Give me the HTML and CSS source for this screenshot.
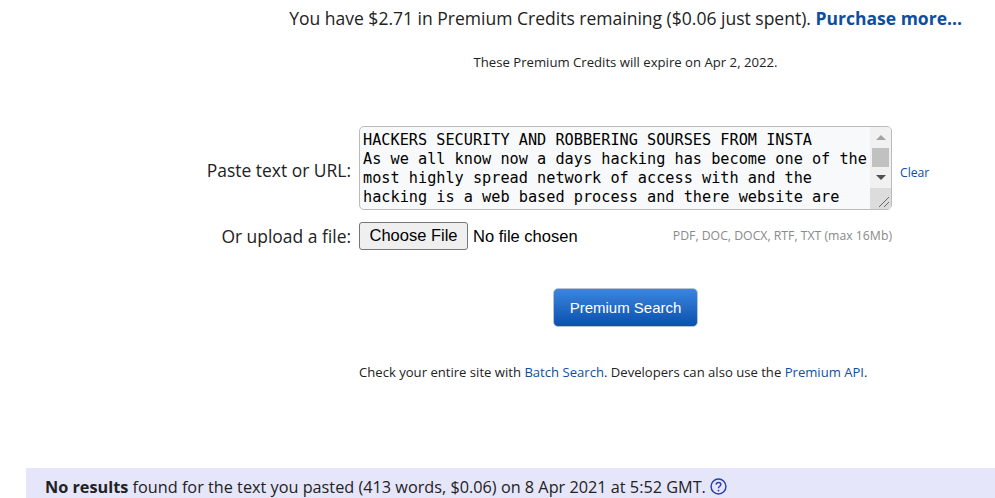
FILE: index.html
```html
<!DOCTYPE html>
<html lang="en">
<head>
  <meta charset="UTF-8">
  <meta name="viewport" content="width=device-width, initial-scale=1.0">
  <title>Premium Search</title>
  <link rel="stylesheet" href="styles.css">
</head>
<body>
  <div class="credits">
    <p class="credits-line">You have $2.71 in Premium Credits remaining ($0.06 just spent). <a href="#" class="link-strong">Purchase more...</a></p>
    <p class="credits-expiry">These Premium Credits will expire on Apr 2, 2022.</p>
  </div>

  <form class="search-form">
    <label for="text" class="form-label">Paste text or URL:</label>
    <div class="text-wrap">
      <textarea id="text" class="text-input" spellcheck="false">HACKERS SECURITY AND ROBBERING SOURSES FROM INSTA
As we all know now a days hacking has become one of the most highly spread network of access with and the hacking is a web based process and there website are vulnerable to many kinds of attacks and the people who use them are not aware of the risks that come with it and so they lose data every single day.</textarea>
      <div class="scrollbar">
        <div class="scroll-btn"><span class="arrow-up"></span></div>
        <div class="scroll-thumb"></div>
        <div class="scroll-btn"><span class="arrow-down"></span></div>
        <div class="scroll-corner">
          <svg xmlns="http://www.w3.org/2000/svg" class="grip-icon" viewBox="0 0 12 12" fill="none" stroke="#666">
            <line x1="1" y1="11" x2="11" y2="1"></line>
            <line x1="6" y1="11" x2="11" y2="6"></line>
          </svg>
        </div>
      </div>
      <a href="#" class="clear-link">Clear</a>
    </div>

    <label for="file" class="form-label form-label-file">Or upload a file:</label>
    <div class="file-row">
      <input type="file" id="file" class="file-input">
      <span class="file-hint">PDF, DOC, DOCX, RTF, TXT (max 16Mb)</span>
    </div>

    <div class="submit-row">
      <button type="submit" class="btn-premium">Premium Search</button>
    </div>

    <p class="batch-note">Check your entire site with <a href="#" class="link">Batch Search</a>. Developers can also use the <a href="#" class="link">Premium API</a>.</p>
  </form>

  <div class="results">
    <b>No results</b> found for the text you pasted (413 words, $0.06) on 8 Apr 2021 at 5:52 GMT.
    <svg class="help-icon" xmlns="http://www.w3.org/2000/svg" viewBox="0 0 16 16" fill="none" stroke="#2d3fb0">
      <circle cx="8" cy="8" r="7" stroke-width="1.4"></circle>
      <path d="M5.8 6.2C5.9 4.9 6.8 4.2 8 4.2c1.3 0 2.2.8 2.2 1.9 0 1-.6 1.4-1.3 1.9-.6.4-.9.8-.9 1.6" stroke-width="1.4"></path>
      <circle cx="8" cy="11.8" r=".6" fill="#2d3fb0" stroke-width=".6"></circle>
    </svg>
  </div>
</body>
</html>
```

FILE: styles.css
```css
* {
  box-sizing: border-box;
}

html, body {
  height: 498px;
  overflow: hidden;
}

body {
  margin: 0;
  font-family: "Open Sans", "Liberation Sans", Arial, sans-serif;
  color: #222;
  background-color: #fff;
}

p {
  margin: 0;
}

a {
  text-decoration: none;
}

.link, .clear-link {
  color: #0d4f9e;
}

.link-strong {
  color: #0d4f9e;
  font-weight: 700;
}

.credits {
  width: 962px;
  padding-top: 6px;
}

.credits-line {
  font-size: 17.53px;
  line-height: 24px;
  text-align: right;
  white-space: nowrap;
}

.credits-expiry {
  margin-top: 24px;
  padding-left: 289px;
  font-size: 13.15px;
  line-height: 17px;
  text-align: center;
  white-space: nowrap;
}

.search-form {
  display: grid;
  grid-template-columns: 351px 533px;
  column-gap: 8px;
  margin-top: 55px;
}

.form-label {
  font-size: 17.45px;
  line-height: 24px;
  text-align: right;
  padding-top: 32px;
  white-space: nowrap;
}

.form-label-file {
  padding-top: 14px;
}

.text-wrap {
  position: relative;
  height: 84px;
}

.text-input {
  display: block;
  width: 533px;
  height: 84px;
  padding: 4px 23px 0 3px;
  border: 1px solid #bbb;
  border-radius: 5px;
  background-color: #f8f9fa;
  color: #000;
  font-family: "DejaVu Sans Mono", monospace;
  font-size: 15.22px;
  line-height: 19px;
  overflow: hidden;
  resize: none;
  outline: none;
}

/* scrollbars are hidden in the capture, so this one is drawn by hand */
.scrollbar {
  position: absolute;
  top: 1px;
  right: 1px;
  bottom: 1px;
  width: 21px;
  display: flex;
  flex-direction: column;
  background-color: #f1f1f1;
  border-radius: 0 4px 4px 0;
  overflow: hidden;
}

.scroll-btn {
  height: 21px;
  display: flex;
  align-items: center;
  justify-content: center;
}

.arrow-up, .arrow-down {
  width: 0;
  height: 0;
  border-left: 5px solid transparent;
  border-right: 5px solid transparent;
}

.arrow-up {
  border-bottom: 5px solid #a3a3a3;
}

.arrow-down {
  border-top: 5px solid #505050;
}

.scroll-thumb {
  height: 19px;
  margin: 0 2px;
  background-color: #c1c1c1;
}

.scroll-corner {
  flex: 1;
  display: flex;
  align-items: flex-end;
  justify-content: flex-end;
  background-color: #dcdcdc;
}

.grip-icon {
  width: 12px;
  height: 12px;
  margin: 0 1px 1px 0;
}

.clear-link {
  position: absolute;
  left: 541px;
  top: 39px;
  font-size: 12.2px;
  line-height: 16px;
}

.file-row {
  display: flex;
  align-items: center;
  justify-content: space-between;
  margin-top: 11px;
  height: 29px;
}

.file-input {
  width: 260px;
  font-family: "Liberation Sans", Arial, sans-serif;
  font-size: 16.5px;
  color: #000;
}

.file-input::file-selector-button {
  height: 28px;
  width: 109px;
  padding: 0;
  margin-right: 5px;
  border: 1px solid #767676;
  border-radius: 3px;
  background-color: #efefef;
}

.file-hint {
  color: #8a8a8a;
  font-size: 12.26px;
  line-height: 16px;
  white-space: nowrap;
}

.submit-row {
  grid-column: 2;
  margin-top: 38px;
  padding-left: 194px;
}

.btn-premium {
  display: block;
  width: 145px;
  height: 39px;
  border: 1px solid #b9c4d2;
  border-radius: 5px;
  background: linear-gradient(#3c86df, #0a50ae);
  color: #fff;
  font-family: "Liberation Sans", Arial, sans-serif;
  font-size: 15px;
  cursor: pointer;
}

.batch-note {
  grid-column: 2;
  margin-top: 37px;
  font-size: 13.1px;
  line-height: 17px;
  white-space: nowrap;
}

.results {
  margin: 87px 0 0 26px;
  height: 40px;
  padding: 8px 19px;
  background-color: #e6e6fa;
  font-size: 16.25px;
  line-height: 22px;
  white-space: nowrap;
}

.help-icon {
  width: 17px;
  height: 17px;
  margin-left: 0;
  vertical-align: -2px;
}
```
